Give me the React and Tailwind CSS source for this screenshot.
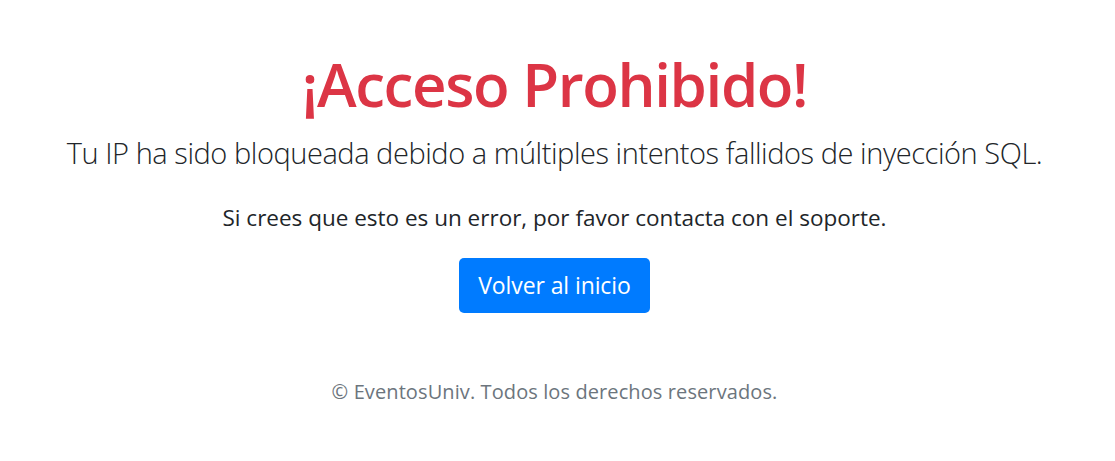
export default function App() {
  return (
    <div className="min-h-screen bg-white font-['Open_Sans',sans-serif] text-[#212529]">
      <div className="flex flex-col items-center pt-[44px] pr-[6px] text-center">
        <h1 className="text-[60px] leading-[80px] font-semibold text-[#dc3545] tracking-[-1.4px]">
          ¡Acceso Prohibido!
        </h1>
        <p className="mt-[9px] text-[29px] leading-[40px] font-light tracking-[-0.45px]">
          Tu IP ha sido bloqueada debido a múltiples intentos fallidos de inyección SQL.
        </p>
        <p className="mt-[29px] text-[22.5px] leading-[32px]">
          Si crees que esto es un error, por favor contacta con el soporte.
        </p>
        <a
          href="#"
          className="mt-[24px] inline-flex h-[55px] w-[191px] items-center justify-center rounded-[5px] bg-[#007bff] text-[23px] text-white tracking-[-0.1px]"
        >
          Volver al inicio
        </a>
        <footer className="mt-[64px] text-[20px] leading-[30px] text-[#6c757d] tracking-[0.1px]">
          © EventosUniv. Todos los derechos reservados.
        </footer>
      </div>
    </div>
  )
}
